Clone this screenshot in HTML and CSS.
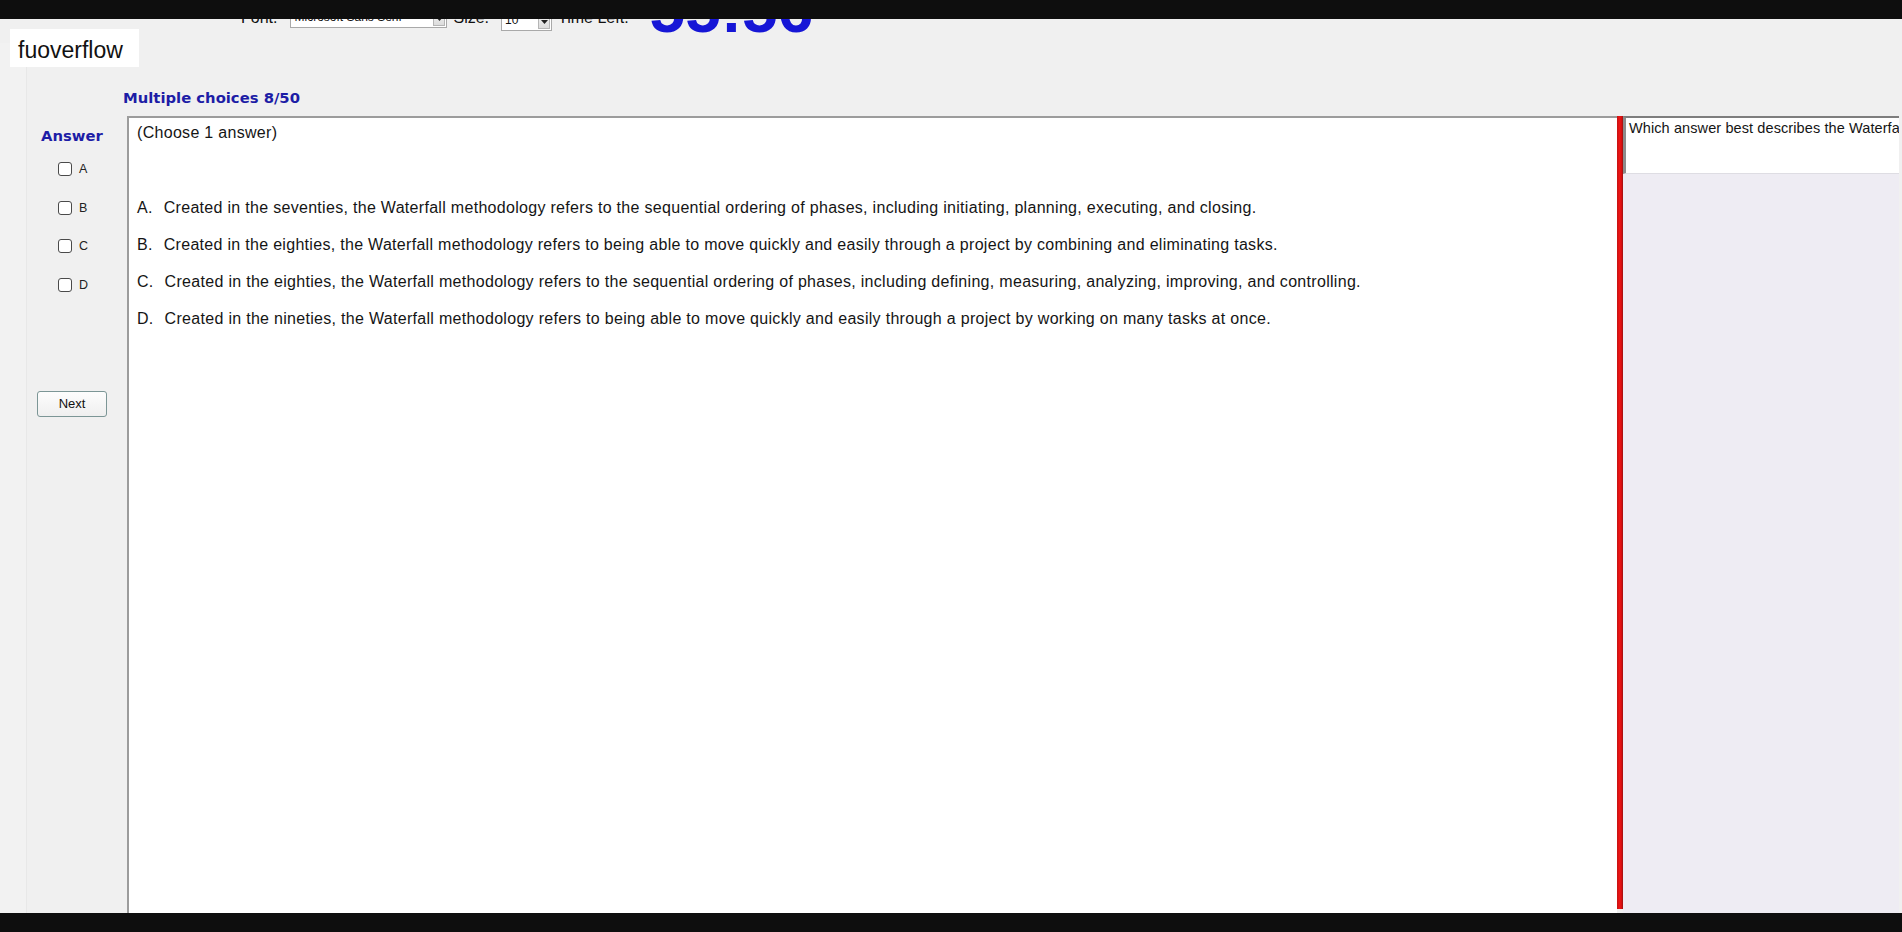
FILE: index.html
```html
<!DOCTYPE html>
<html lang="en">
<head>
<meta charset="utf-8">
<title>Exam</title>
<link rel="stylesheet" href="styles.css">
</head>
<body>
<div class="screen">
  <div class="letterbox"></div>
  <div class="page">
    <div class="toolbar">
      <span class="tlabel">Font:</span>
      <div class="combo combo-font">
        <span class="combo-text">Microsoft Sans Serif</span>
        <span class="combo-btn"><svg width="7" height="4" viewBox="0 0 7 4"><path d="M0 0h7L3.5 4z" fill="#222"/></svg></span>
      </div>
      <span class="tlabel">Size:</span>
      <div class="combo combo-size">
        <span class="combo-text">10</span>
        <span class="combo-btn"><svg width="7" height="4" viewBox="0 0 7 4"><path d="M0 0h7L3.5 4z" fill="#222"/></svg></span>
      </div>
      <span class="tlabel">Time Left:</span>
      <span class="timer">55:56</span>
    </div>
    <div class="watermark">fuoverflow</div>
    <div class="exam">
      <div class="title">Multiple choices 8/50</div>
      <div class="workspace">
        <div class="answer-col">
          <div class="answer-head">Answer</div>
          <ul class="choices">
            <li><span class="box"></span>A</li>
            <li><span class="box"></span>B</li>
            <li><span class="box"></span>C</li>
            <li><span class="box"></span>D</li>
          </ul>
          <button class="next" type="button">Next</button>
        </div>
        <div class="question">
          <p class="hint">(Choose 1 answer)</p>
          <div class="options">
            <p><span class="key">A.</span>Created in the seventies, the Waterfall methodology refers to the sequential ordering of phases, including initiating, planning, executing, and closing.</p>
            <p><span class="key">B.</span>Created in the eighties, the Waterfall methodology refers to being able to move quickly and easily through a project by combining and eliminating tasks.</p>
            <p><span class="key">C.</span>Created in the eighties, the Waterfall methodology refers to the sequential ordering of phases, including defining, measuring, analyzing, improving, and controlling.</p>
            <p><span class="key">D.</span>Created in the nineties, the Waterfall methodology refers to being able to move quickly and easily through a project by working on many tasks at once.</p>
          </div>
        </div>
        <div class="splitter"></div>
        <div class="side">
          <div class="side-text">Which answer best describes the Waterfall methodology?</div>
        </div>
      </div>
    </div>
  </div>
  <div class="letterbox"></div>
</div>
</body>
</html>
```

FILE: styles.css
```css
html, body {
  margin: 0;
  padding: 0;
  height: 100%;
}
body {
  background: #0e0e0e;
  font-family: "Liberation Sans", Arial, sans-serif;
  color: #111;
  overflow: hidden;
}
.screen {
  display: flex;
  flex-direction: column;
  height: 932px;
}
.letterbox {
  flex: none;
  height: 19px;
  background: #0e0e0e;
}
.page {
  flex: 1;
  min-height: 0;
  position: relative;
  background: #f0f0f0;
  overflow: hidden;
  display: flex;
  flex-direction: column;
}

/* top toolbar (scrolled partly out of view) */
.toolbar {
  flex: none;
  height: 24px;
  overflow: hidden;
  display: flex;
  align-items: flex-end;
  padding-left: 241px;
}
.tlabel {
  font-size: 16px;
  line-height: 15px;
  margin-bottom: 18px;
  white-space: nowrap;
  color: #111;
}
.combo {
  position: relative;
  display: flex;
  align-items: flex-end;
  box-sizing: border-box;
  height: 21px;
  background: #fff;
  border: 1px solid #a9a9a9;
  font-size: 12px;
}
.combo-font {
  width: 157px;
  margin: 0 6px 15px 13px;
}
.combo-size {
  width: 51px;
  margin: 0 6px 12px 12px;
}
.combo-text {
  flex: 1;
  padding: 0 0 3px 3px;
  line-height: 14px;
  white-space: nowrap;
  overflow: hidden;
}
.combo-btn {
  flex: none;
  width: 12px;
  height: 16px;
  margin: 0 1px 1px 0;
  background: linear-gradient(#f4f4f4, #dcdcdc);
  border: 1px solid #b5b5b5;
  box-sizing: border-box;
  display: flex;
  align-items: flex-end;
  justify-content: center;
  padding-bottom: 4px;
}
.timer {
  font-size: 64px;
  line-height: 64px;
  font-weight: bold;
  color: #1616d6;
  margin: 0 0 1px 21px;
  white-space: nowrap;
}

/* watermark overlay */
.watermark {
  position: absolute;
  left: 10px;
  top: 10px;
  width: 129px;
  height: 38px;
  box-sizing: border-box;
  padding-left: 8px;
  background: #fff;
  font-size: 23px;
  line-height: 42px;
  overflow: hidden;
  color: #111;
}

/* exam area */
.exam {
  flex: 1;
  min-height: 0;
  display: flex;
  flex-direction: column;
  background: linear-gradient(to right, #f2f2f2 0 26px, #e8e8e8 26px 27px, #f0f0f0 27px);
}
.title {
  flex: none;
  margin: 46px 0 9px 123px;
  font-family: "DejaVu Sans", Verdana, sans-serif;
  font-weight: bold;
  font-size: 14.8px;
  line-height: 18px;
  color: #1d1da6;
}
.workspace {
  flex: 1;
  min-height: 0;
  display: grid;
  grid-template-columns: 127px 1490px 6px 1fr;
}

/* answer column */
.answer-col {
  padding-top: 11px;
  display: flex;
  flex-direction: column;
  align-items: flex-start;
}
.answer-head {
  margin-left: 41px;
  font-family: "DejaVu Sans", Verdana, sans-serif;
  font-weight: bold;
  font-size: 14.8px;
  line-height: 18px;
  color: #1d1da6;
}
.choices {
  list-style: none;
  margin: 4.65px 0 0 0;
  padding: 0 0 0 58px;
}
.choices li {
  height: 38.7px;
  display: flex;
  align-items: center;
  font-size: 12.5px;
  color: #222;
}
.box {
  width: 14px;
  height: 14px;
  box-sizing: border-box;
  border: 1px solid #4a4a4a;
  border-radius: 3px;
  background: #fff;
  margin-right: 7px;
}
.next {
  margin: 86.5px 0 0 37px;
  width: 70px;
  height: 26px;
  padding: 0;
  border: 1px solid #7c9696;
  border-radius: 3px;
  background: linear-gradient(#fdfdfd, #efefef);
  font-family: "Liberation Sans", Arial, sans-serif;
  font-size: 13px;
  color: #111;
}

/* question text */
.question {
  background: #fff;
  border-top: 2px solid #9c9c9c;
  border-left: 2px solid #9c9c9c;
  padding: 6px 0 0 8px;
  font-size: 16px;
  letter-spacing: 0.3px;
  line-height: 18.65px;
  color: #151515;
  overflow: hidden;
}
.question p {
  margin: 0;
  white-space: nowrap;
}
.key {
  margin-right: 11px;
}
.options {
  margin-top: 55.95px;
}
.options p + p {
  margin-top: 18.65px;
}

/* splitter */
.splitter {
  margin-bottom: 4px;
  background: linear-gradient(to right, #c41212, #ec1414 40%, #e01010 70%, #9c1010);
}

/* side panel */
.side {
  min-width: 0;
  overflow: hidden;
  margin-right: 3px;
  background: #eeecf3;
}
.side-text {
  box-sizing: border-box;
  height: 58px;
  background: #fff;
  border-top: 2px solid #7e7e7e;
  border-left: 3px solid #8c8c8c;
  border-bottom: 1px solid #dedde3;
  padding: 2px 0 0 3px;
  font-size: 14.5px;
  letter-spacing: 0.1px;
  line-height: 16px;
  white-space: nowrap;
  color: #151515;
}
```
